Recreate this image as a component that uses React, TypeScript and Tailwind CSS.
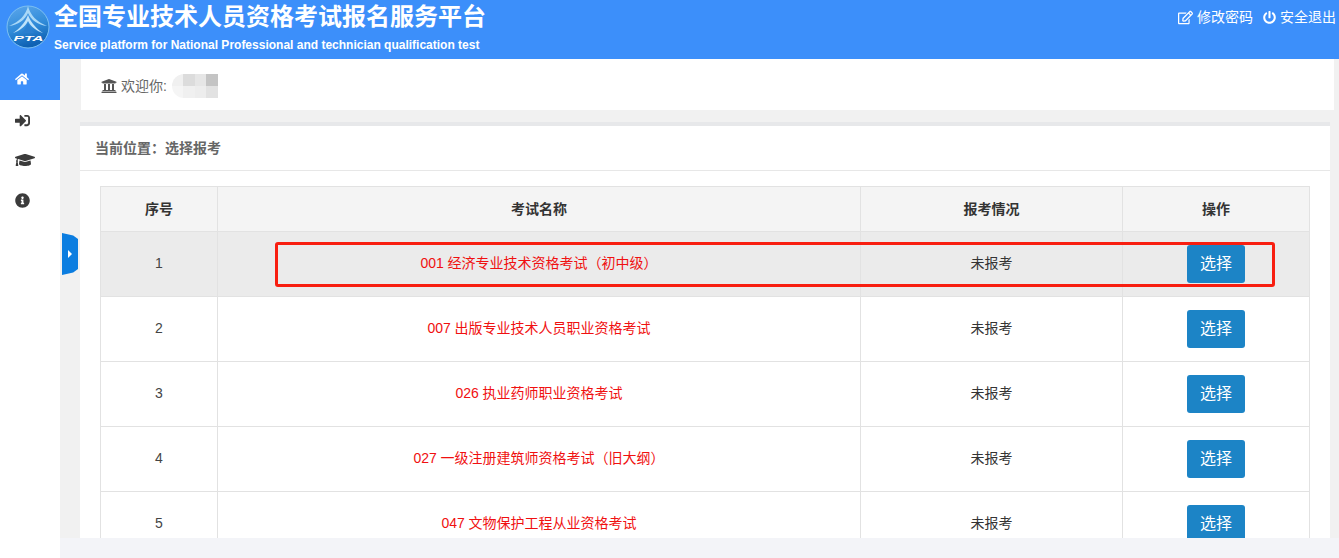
import { FaGraduationCap, FaHome, FaInfoCircle, FaPowerOff, FaRegEdit, FaSignInAlt, FaUniversity } from 'react-icons/fa';

const exams = [
  { id: 1, name: '001 经济专业技术资格考试（初中级）' },
  { id: 2, name: '007 出版专业技术人员职业资格考试' },
  { id: 3, name: '026 执业药师职业资格考试' },
  { id: 4, name: '027 一级注册建筑师资格考试（旧大纲）' },
  { id: 5, name: '047 文物保护工程从业资格考试' },
];

function Logo() {
  return (
    <svg width="44" height="44" viewBox="0 0 44 44" className="shrink-0">
      <defs>
        <linearGradient id="globe" x1="0" y1="0" x2="0.3" y2="1">
          <stop offset="0%" stopColor="#5ea8ec" />
          <stop offset="60%" stopColor="#2f8ad8" />
          <stop offset="100%" stopColor="#0f62b4" />
        </linearGradient>
      </defs>
      <circle cx="22" cy="22" r="21" fill="url(#globe)" stroke="#7cc0f2" strokeWidth="1" />
      <path d="M22 1 C20 10 13 17 3 21 C12 20 19 15 22 8 C25 15 32 20 41 21 C31 17 24 10 22 1 Z" fill="#a9d8f7" />
      <path d="M22 10 C19 18 13 24 7 28 C13 26 19 22 22 16 C25 22 31 26 37 28 C31 24 25 18 22 10 Z" fill="#bfe3fa" />
      <path d="M22 18 C20 22 18 26 16 28 L28 28 C26 26 24 22 22 18 Z" fill="#2a7fd0" />
      <text x="22.5" y="35.5" textAnchor="middle" fontSize="8" fontWeight="700" fontStyle="italic" textLength="30" lengthAdjust="spacingAndGlyphs" fill="#ffffff" fontFamily="'Liberation Sans', sans-serif">PTA</text>
    </svg>
  );
}

export default function App() {
  return (
    <div className="h-[558px] w-[1339px] overflow-hidden flex flex-col bg-white text-[14px] text-[#333] font-['Liberation_Sans','Noto_Sans_CJK_SC',sans-serif]">
      <header className="h-[59px] shrink-0 bg-[#3c8ffa] flex text-white">
        <div className="pl-[6px] pt-[5px]">
          <Logo />
        </div>
        <div className="pl-[4px] flex-1">
          <h1 className="text-[24px] leading-[34px] font-bold">全国专业技术人员资格考试报名服务平台</h1>
          <p className="text-[12px] leading-[16px] mt-[3px] font-bold">Service platform for National Professional and technician qualification test</p>
        </div>
        <div className="flex items-start gap-[10px] pt-[7px] pr-[3px] text-[14px] leading-[20px]">
          <span className="flex items-center gap-[4px]"><FaRegEdit className="text-[15px]" />修改密码</span>
          <span className="flex items-center gap-[4px]"><FaPowerOff className="text-[13px]" />安全退出</span>
        </div>
      </header>

      <div className="flex flex-1 min-h-0">
        <nav className="w-[60px] shrink-0 bg-white text-[#3b3b3b] text-[15px]">
          <div className="h-[41px] bg-[#3c8ffa] text-white flex items-center justify-center pr-[16px] pb-[2px] text-[14px]"><FaHome /></div>
          <div className="h-[40px] flex items-center justify-center pr-[16px]"><FaSignInAlt /></div>
          <div className="h-[40px] flex items-center justify-center pr-[10px] text-[20px]"><FaGraduationCap /></div>
          <div className="h-[40px] flex items-center justify-center pr-[16px]"><FaInfoCircle /></div>
        </nav>

        <div className="relative flex-1 flex flex-col min-w-0 bg-[#f3f4f8]">
          <button className="absolute left-[2px] top-[174px] z-10 w-[16px] h-[42px] bg-[#0b7de0] rounded-r-[5px] flex items-center justify-center [clip-path:polygon(0_0,70%_6%,100%_14%,100%_86%,70%_94%,0_100%)]">
            <span className="w-0 h-0 border-y-[4px] border-y-transparent border-l-[4px] border-l-white" />
          </button>

          <main className="h-[479px] shrink-0 overflow-hidden bg-[#f1f1f1] pl-[20px] pr-[5px]">
            <div className="h-[51px] ml-[1px] bg-white flex items-center pl-[20px] pt-[3px] text-[#666] text-[14px]">
              <FaUniversity className="text-[16px] text-[#555] mr-[4px]" />
              <span>欢迎你:</span>
              <span className="ml-[5px] h-[24px] w-[46px] rounded-l-[12px] overflow-hidden grid grid-cols-4 grid-rows-2">
                <i className="bg-[#f0f0f0]" /><i className="bg-[#dcdcdc]" /><i className="bg-[#e6e6e6]" /><i className="bg-[#c4c4c4]" />
                <i className="bg-[#f5f5f5]" /><i className="bg-[#f0f0f0]" /><i className="bg-[#ededed]" /><i className="bg-[#e2e2e2]" />
              </span>
            </div>

            <section className="mt-[12px] mr-[4px] bg-white border-t-[4px] border-[#e7e8ea] h-[420px]">
              <div className="h-[45px] border-b border-[#e7e7e7] flex items-center pl-[15px] text-[14px] font-bold text-[#666]">
                当前位置：选择报考
              </div>
              <div className="relative pl-[20px] pr-[20px] pt-[15px]">
                <table className="w-[1210px] table-fixed border-collapse text-center text-[14px]">
                  <thead>
                    <tr className="h-[45px] bg-[#f4f4f4] text-[#333]">
                      <th className="w-[117px] border border-[#e2e2e2] font-bold">序号</th>
                      <th className="w-[643px] border border-[#e2e2e2] font-bold">考试名称</th>
                      <th className="w-[262px] border border-[#e2e2e2] font-bold">报考情况</th>
                      <th className="border border-[#e2e2e2] font-bold">操作</th>
                    </tr>
                  </thead>
                  <tbody>
                    {exams.map((exam) => (
                      <tr key={exam.id} className={exam.id === 1 ? 'h-[65px] bg-[#ebebeb]' : 'h-[65px] bg-white'}>
                        <td className="border border-[#e2e2e2] pb-[1px] text-[#444]">{exam.id}</td>
                        <td className="border border-[#e2e2e2] pb-[1px] text-[#f01010]">{exam.name}</td>
                        <td className="border border-[#e2e2e2] pb-[1px] text-[#333]">未报考</td>
                        <td className="border border-[#e2e2e2]">
                          <button className="block mx-auto w-[58px] h-[38px] rounded-[3px] bg-[#1c84c6] text-white text-[16px]">选择</button>
                        </td>
                      </tr>
                    ))}
                  </tbody>
                </table>
                <div className="absolute left-[195px] top-[71px] w-[1000px] h-[45px] border-[3px] border-[#f81e10] rounded-[3px] pointer-events-none" />
              </div>
            </section>
          </main>
        </div>
      </div>
    </div>
  );
}
